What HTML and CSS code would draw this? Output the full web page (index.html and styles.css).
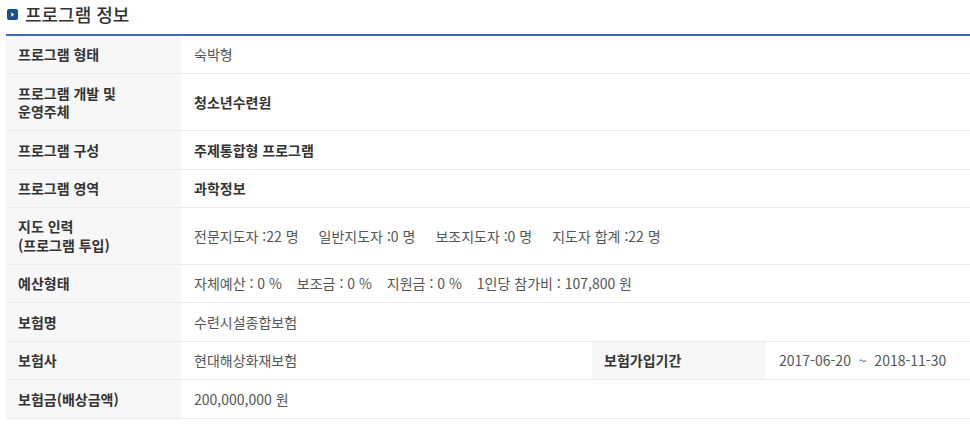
FILE: index.html
```html
<!DOCTYPE html>
<html lang="ko">
<head>
<meta charset="utf-8">
<link rel="stylesheet" href="styles.css">
</head>
<body>
<div class="wrap">
  <h3 class="title"><span class="bullet"><svg width="11" height="11" viewBox="0 0 11 11"><rect x="0" y="0" width="11" height="11" rx="2" fill="#1c4f8f"/><path d="M4.4 3.3 L7.2 5.5 L4.4 7.7 Z" fill="#fff"/></svg></span>프로그램 정보</h3>
  <table class="info">
    <colgroup>
      <col class="c1"><col class="c2"><col class="c3"><col class="c4">
    </colgroup>
    <tbody>
      <tr><th>프로그램 형태</th><td colspan="3">숙박형</td></tr>
      <tr><th>프로그램 개발 및<br>운영주체</th><td colspan="3" class="strong">청소년수련원</td></tr>
      <tr><th>프로그램 구성</th><td colspan="3" class="strong">주제통합형 프로그램</td></tr>
      <tr><th>프로그램 영역</th><td colspan="3" class="strong">과학정보</td></tr>
      <tr><th>지도 인력<br>(프로그램 투입)</th><td colspan="3"><span class="item wide">전문지도자 :22 명</span><span class="item wide">일반지도자 :0 명</span><span class="item wide">보조지도자 :0 명</span><span class="item wide">지도자 합계 :22 명</span></td></tr>
      <tr><th>예산형태</th><td colspan="3"><span class="item">자체예산 : 0 %</span><span class="item">보조금 : 0 %</span><span class="item">지원금 : 0 %</span><span class="item">1인당 참가비 : 107,800 원</span></td></tr>
      <tr><th>보험명</th><td colspan="3">수련시설종합보험</td></tr>
      <tr><th>보험사</th><td>현대해상화재보험</td><th>보험가입기간</th><td>2017-06-20&nbsp;&nbsp;~&nbsp;&nbsp;2018-11-30</td></tr>
      <tr><th>보험금(배상금액)</th><td colspan="3">200,000,000 원</td></tr>
    </tbody>
  </table>
</div>
</body>
</html>
```

FILE: styles.css
```css
html, body {
  margin: 0;
  padding: 0;
  background: #fff;
}
body {
  font-family: "Noto Sans CJK KR", "Noto Sans", sans-serif;
  color: #333;
}
.wrap {
  padding: 0 0 0 6px;
  width: 964px;
}
.title {
  margin: 0;
  height: 34px;
  display: flex;
  align-items: center;
  font-size: 18px;
  font-weight: 500;
  color: #333;
  line-height: 20px;
  padding-bottom: 6px;
  box-sizing: border-box;
}
.bullet {
  display: inline-flex;
  margin: 0 7px 0 1px;
}
.bullet svg { display: block; }
.info {
  width: 964px;
  border-collapse: collapse;
  table-layout: fixed;
  border-top: 2px solid #3a6db0;
  font-size: 14px;
}
.c1 { width: 175px; }
.c2 { width: 411px; }
.c3 { width: 174px; }
.c4 { width: 204px; }
.info th, .info td {
  border-bottom: 1px solid #ebebeb;
  padding: 9.4px 12px;
  line-height: 18.6px;
  text-align: left;
  vertical-align: middle;
  white-space: nowrap;
}
.info th {
  background: #f7f7f7;
  font-weight: 700;
  color: #333;
}
.info td {
  color: #555;
  font-weight: 400;
  padding-left: 13px;
}
.info td.strong {
  font-weight: 700;
  color: #333;
}
.item {
  margin-right: 15px;
}
.item.wide {
  margin-right: 20px;
}
```
